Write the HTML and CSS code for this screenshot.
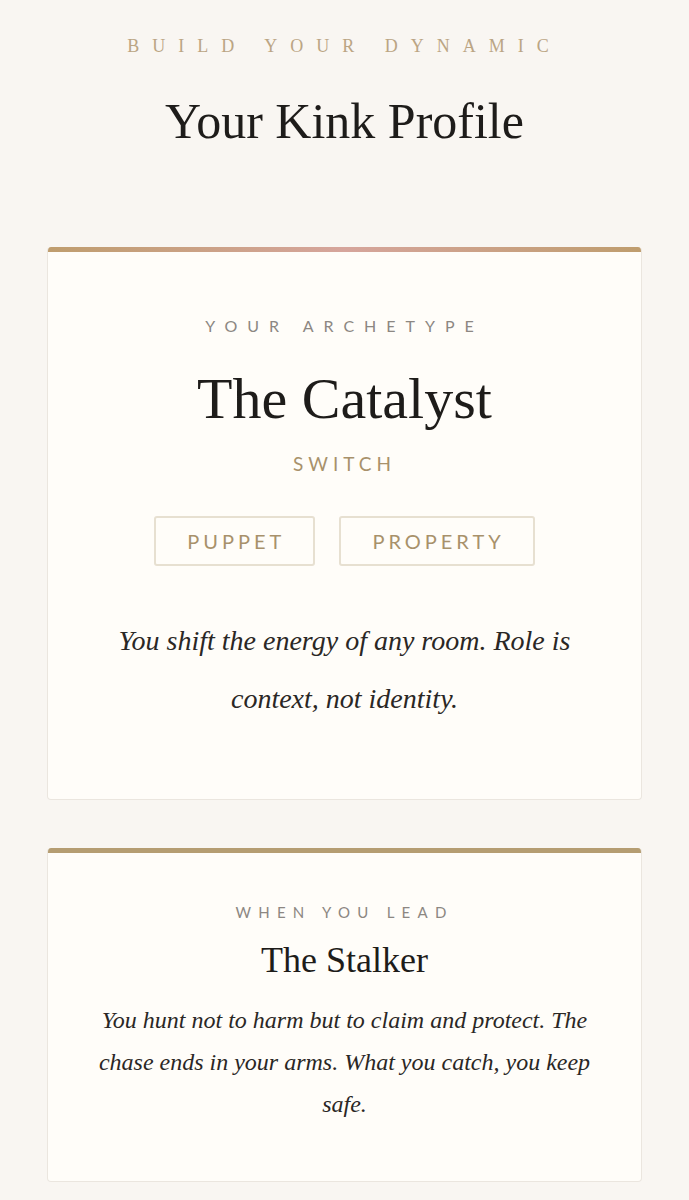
FILE: index.html
```html
<!doctype html>
<html>
<head>
    <meta charset="utf-8">
    <title>Your Kink Profile</title>
    <link rel="stylesheet" href="styles.css">
</head>
<body>
    <header class="page-head">
        <div class="eyebrow">Build your dynamic</div>
        <h1 class="page-title">Your Kink Profile</h1>
    </header>

    <main class="results">
        <section class="card card-archetype">
            <div class="card-body">
                <div class="label">Your archetype</div>
                <h2 class="archetype-name">The Catalyst</h2>
                <div class="role">Switch</div>
                <ul class="tags">
                    <li>Puppet</li>
                    <li>Property</li>
                </ul>
                <p class="blurb blurb-lg">You shift the energy of any room. Role is context, not identity.</p>
            </div>
        </section>

        <section class="card">
            <div class="card-body card-body-sm">
                <div class="label label-sm">When you lead</div>
                <h3 class="sub-name">The Stalker</h3>
                <p class="blurb">You hunt not to harm but to claim and protect. The chase ends in your arms. What you catch, you keep safe.</p>
            </div>
        </section>
    </main>
</body>
</html>
```

FILE: styles.css
```css
:root {
    --bg: #f9f6f2;
    --card: #fffdf9;
    --gold: #a8916b;
    --tan: #bba584;
    --ink: #1e1c1a;
    --muted: #8c8782;
    --serif: "Liberation Serif", "DejaVu Serif", serif;
    --sans: Lato, "Open Sans", sans-serif;
}

html, body {
    margin: 0;
    background: var(--bg);
    color: var(--ink);
}
h1, h2, h3, p {
    margin: 0;
    font-weight: normal;
}

.page-head {
    text-align: center;
    padding-top: 34px;
}
.eyebrow {
    font-family: var(--serif);
    font-size: 18px;
    line-height: 24px;
    letter-spacing: 13px;
    text-transform: uppercase;
    color: var(--tan);
}
.page-title {
    margin-top: 33px;
    font-family: var(--serif);
    font-size: 50px;
    line-height: 60px;
}

.results {
    display: flex;
    flex-direction: column;
    gap: 48px;
    padding: 96px 47px 40px;
}

.card {
    background: var(--card);
    border: 1px solid #ebe6df;
    border-top: none;
    border-radius: 4px;
    overflow: hidden;
    text-align: center;
}
.card::before {
    content: "";
    display: block;
    height: 5px;
    background: #b59d72;
}
.card-archetype::before {
    background: linear-gradient(90deg, #bf9d6e 0%, #d6a59c 50%, #bf9d6e 100%);
}

.card-body {
    padding: 64px 48px 71px;
}
.card-body-sm {
    padding: 49px 48px 56px;
}

.label {
    font-family: var(--sans);
    font-size: 16px;
    line-height: 20px;
    letter-spacing: 10px;
    text-transform: uppercase;
    color: var(--muted);
}
.label-sm {
    font-size: 15px;
    letter-spacing: 7.25px;
}

.archetype-name {
    margin-top: 31px;
    font-family: var(--serif);
    font-size: 58px;
    line-height: 64px;
}
.role {
    margin-top: 21px;
    font-family: var(--sans);
    font-size: 19px;
    line-height: 24px;
    letter-spacing: 5px;
    text-transform: uppercase;
    color: var(--gold);
}

.tags {
    list-style: none;
    margin: 40px 0 0;
    padding: 0;
    display: flex;
    justify-content: center;
    gap: 24px;
}
.tags li {
    border: 2px solid #e7e0d1;
    border-radius: 3px;
    padding: 12px 28px 12px 31px;
    font-family: var(--sans);
    font-size: 20px;
    line-height: 22px;
    letter-spacing: 4px;
    text-transform: uppercase;
    color: var(--gold);
}

.sub-name {
    margin-top: 16px;
    font-family: var(--serif);
    font-size: 36px;
    line-height: 44px;
}

.blurb {
    margin-top: 17px;
    font-family: var(--serif);
    font-style: italic;
    font-size: 24px;
    line-height: 42px;
    color: #2a2725;
}
.blurb-lg {
    margin-top: 46px;
    font-size: 28px;
    line-height: 58px;
}
```
